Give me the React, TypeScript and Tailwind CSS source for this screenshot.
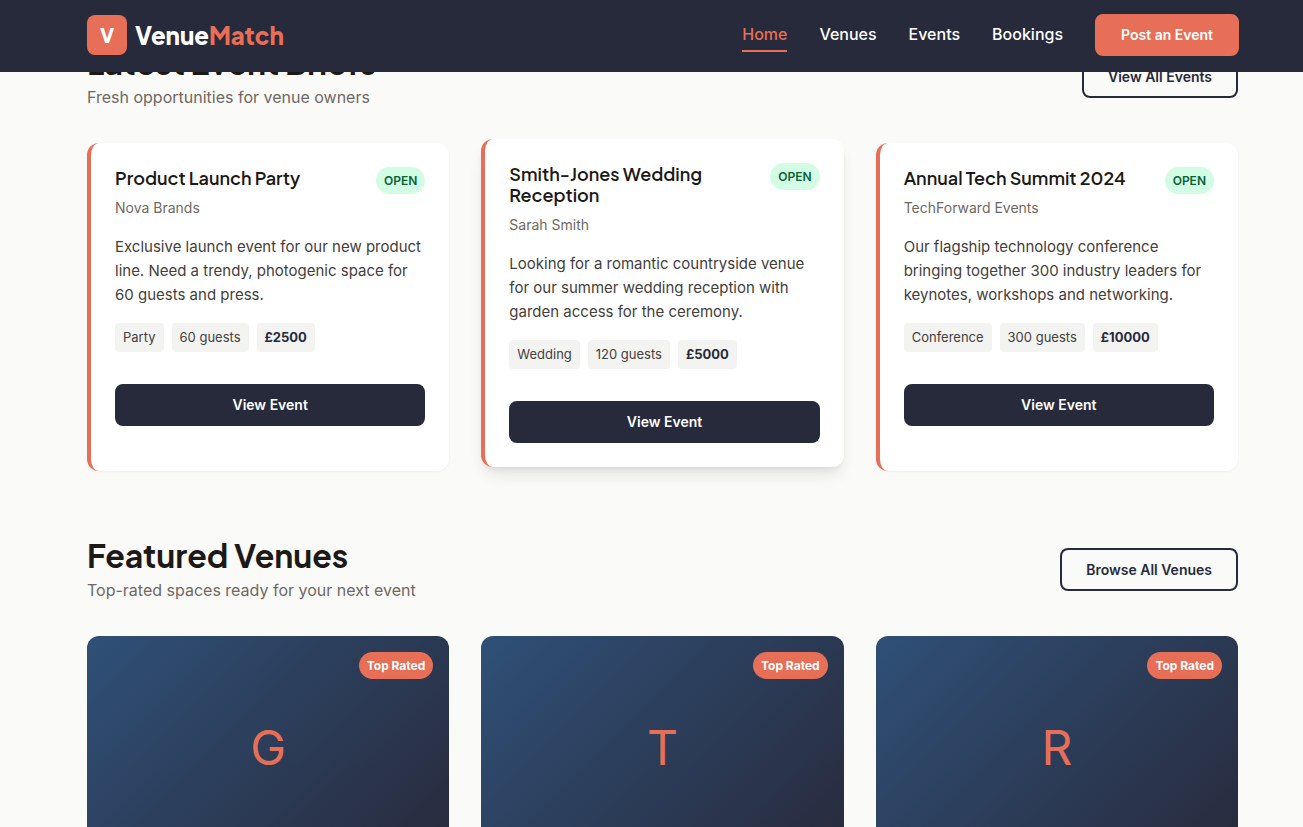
import type { ReactNode } from "react";
import { clsx } from "clsx";

type EventBrief = {
  title: string;
  host: string;
  description: string;
  type: string;
  guests: number;
  budget: number;
  raised?: boolean;
};

const navLinks = ["Home", "Venues", "Events", "Bookings"];

const events: EventBrief[] = [
  {
    title: "Product Launch Party",
    host: "Nova Brands",
    description: "Exclusive launch event for our new product line. Need a trendy, photogenic space for 60 guests and press.",
    type: "Party",
    guests: 60,
    budget: 2500
  },
  {
    title: "Smith-Jones Wedding Reception",
    host: "Sarah Smith",
    description: "Looking for a romantic countryside venue for our summer wedding reception with garden access for the ceremony.",
    type: "Wedding",
    guests: 120,
    budget: 5000,
    raised: true
  },
  {
    title: "Annual Tech Summit 2024",
    host: "TechForward Events",
    description: "Our flagship technology conference bringing together 300 industry leaders for keynotes, workshops and networking.",
    type: "Conference",
    guests: 300,
    budget: 10000
  }
];

const venues = ["G", "T", "R"];

function Header() {
  return (
    <header className="sticky top-0 z-10 flex h-18 items-center justify-between border-b-2 border-[#272a3a] bg-[#272a3a] pr-16 pl-[87px]">
      <a href="#" className="flex items-center gap-2 font-['Plus_Jakarta_Sans','Inter',sans-serif] font-extrabold text-white">
        <span className="flex size-10 items-center justify-center rounded-lg bg-[#e76f57] text-xl">V</span>
        <span className="text-2xl">
          Venue<span className="text-[#e76f57]">Match</span>
        </span>
      </a>
      <nav className="flex items-center gap-8">
        {navLinks.map((link) => (
          <a
            key={link}
            href="#"
            className={clsx(
              "border-b-2 text-base leading-8 font-medium",
              link === "Home" ? "border-[#e76f57] text-[#e76f57]" : "border-transparent text-white"
            )}
          >
            {link}
          </a>
        ))}
        <button className="rounded-lg border-2 border-[#e76f57] bg-[#e76f57] px-6 py-2 text-sm leading-[22px] font-semibold text-white">
          Post an Event
        </button>
      </nav>
    </header>
  );
}

function Section({
  title,
  subtitle,
  action,
  children
}: {
  title: string;
  subtitle: string;
  action: string;
  children: ReactNode;
}) {
  return (
    <section>
      <div className="mb-8 flex items-center justify-between">
        <div>
          <h2 className="font-['Plus_Jakarta_Sans','Inter',sans-serif] text-[32px] leading-[43px] font-bold text-[#1c1917]">{title}</h2>
          <p className="text-base leading-[27px] text-[#6f6863]">{subtitle}</p>
        </div>
        <button className="rounded-lg border-2 border-[#272a3a] px-6 py-2 text-sm leading-[23px] font-semibold text-[#272a3a]">
          {action}
        </button>
      </div>
      <div className="grid grid-cols-3 gap-8">{children}</div>
    </section>
  );
}

function EventCard({ event }: { event: EventBrief }) {
  return (
    <article
      className={clsx(
        "rounded-xl border-l-4 border-[#e76f57] bg-white p-6",
        event.raised ? "-translate-y-1 shadow-lg" : "shadow-[0_1px_2px_rgba(0,0,0,0.05)]"
      )}
    >
      <div className="mb-4 flex items-start justify-between gap-4">
        <div>
          <h3 className="mb-2 font-['Plus_Jakarta_Sans','Inter',sans-serif] text-lg leading-[21px] font-semibold text-[#1c1917]">
            {event.title}
          </h3>
          <p className="text-sm leading-[23px] text-[#6f6863]">{event.host}</p>
        </div>
        <span className="rounded-full bg-[#d3fce4] px-2 py-1 text-xs leading-[19px] font-semibold text-[#066336]">OPEN</span>
      </div>
      <p className="mb-4 text-[15px] leading-6 text-[#44403c]">{event.description}</p>
      <div className="mb-8 flex gap-2 text-[13px] leading-[21px] text-[#44403c]">
        <span className="rounded bg-[#f3f3f1] px-2 py-1">{event.type}</span>
        <span className="rounded bg-[#f3f3f1] px-2 py-1">{event.guests} guests</span>
        <span className="rounded bg-[#f3f3f1] px-2 py-1 font-bold text-[#272a3a]">£{event.budget}</span>
      </div>
      <button className="w-full rounded-lg border-2 border-[#272a3a] bg-[#272a3a] px-6 py-2 text-sm leading-[22px] font-semibold text-white">
        View Event
      </button>
    </article>
  );
}

function VenueCard({ initial }: { initial: string }) {
  return (
    <article className="relative flex h-56 items-center justify-center rounded-t-xl bg-[linear-gradient(135deg,#2f5077_0%,#282a3b_100%)]">
      <span className="text-5xl text-[#e76f57]">{initial}</span>
      <span className="absolute top-4 right-4 rounded-full bg-[#e76f57] px-2 py-1 text-xs leading-[19px] font-bold text-white">
        Top Rated
      </span>
    </article>
  );
}

export default function App() {
  return (
    <div className="min-h-screen bg-[#fafaf8] font-['Inter',sans-serif]">
      <Header />
      <main className="-mt-[31px] flex flex-col gap-[63px] pr-[65px] pl-[87px]">
        <Section title="Latest Event Briefs" subtitle="Fresh opportunities for venue owners" action="View All Events">
          {events.map((event) => (
            <EventCard key={event.title} event={event} />
          ))}
        </Section>
        <Section title="Featured Venues" subtitle="Top-rated spaces ready for your next event" action="Browse All Venues">
          {venues.map((initial) => (
            <VenueCard key={initial} initial={initial} />
          ))}
        </Section>
      </main>
    </div>
  );
}
